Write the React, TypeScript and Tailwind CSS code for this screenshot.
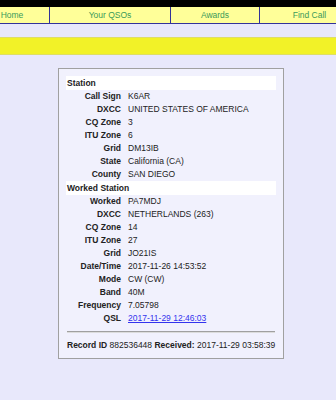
import React from 'react'

type Row = { label: string; value: string; link?: boolean }

const station: Row[] = [
  { label: 'Call Sign', value: 'K6AR' },
  { label: 'DXCC', value: 'UNITED STATES OF AMERICA' },
  { label: 'CQ Zone', value: '3' },
  { label: 'ITU Zone', value: '6' },
  { label: 'Grid', value: 'DM13IB' },
  { label: 'State', value: 'California (CA)' },
  { label: 'County', value: 'SAN DIEGO' },
]

const worked: Row[] = [
  { label: 'Worked', value: 'PA7MDJ' },
  { label: 'DXCC', value: 'NETHERLANDS (263)' },
  { label: 'CQ Zone', value: '14' },
  { label: 'ITU Zone', value: '27' },
  { label: 'Grid', value: 'JO21IS' },
  { label: 'Date/Time', value: '2017-11-26 14:53:52' },
  { label: 'Mode', value: 'CW (CW)' },
  { label: 'Band', value: '40M' },
  { label: 'Frequency', value: '7.05798' },
  { label: 'QSL', value: '2017-11-29 12:46:03', link: true },
]

function Section({ title, rows }: { title: string; rows: Row[] }) {
  return (
    <div>
      <div className="bg-white h-[14px] leading-[14px] pl-[1px] font-bold">{title}</div>
      {rows.map((r) => (
        <div key={r.label} className="flex h-[13px] leading-[13px]">
          <div className="w-[55px] text-right font-bold shrink-0">{r.label}</div>
          <div className="pl-[7px] whitespace-nowrap">
            {r.link ? <a href="#" className="text-[#3333ee] underline">{r.value}</a> : r.value}
          </div>
        </div>
      ))}
    </div>
  )
}

export default function App() {
  return (
    <div
      className="w-[336px] h-[400px] overflow-hidden bg-[#e8e8fb] text-[8.5px] text-[#222]"
      style={{ fontFamily: '"Liberation Sans", Arial, sans-serif' }}
    >
      <div className="h-[7px] bg-black" />
      <div className="flex h-[17px] leading-[16px] bg-[#ffff99] text-[#3a9a5a] border-b border-[#333399] overflow-hidden">
        <div className="w-[75px] ml-[-25px] shrink-0 text-center border-r border-[#333399]">Home</div>
        <div className="w-[121px] shrink-0 text-center border-r border-[#333399]">Your QSOs</div>
        <div className="w-[89px] shrink-0 text-center border-r border-[#333399]">Awards</div>
        <div className="w-[99px] shrink-0 text-center">Find Call</div>
      </div>
      <div className="h-[13px]" />
      <div className="h-[18px] bg-[#f2f228] border-y border-[#dede66]" />
      <div className="h-[13px]" />
      <div className="ml-[58px] w-[226px] border border-[#a0a0a0] bg-[#f1f1fd] p-[7px]">
        <Section title="Station" rows={station} />
        <Section title="Worked Station" rows={worked} />
        <div className="mx-[1px] mt-[6px] border-t border-[#a0a0a0] border-b border-b-[#dcdcdc]" />
        <div className="h-[12px] leading-[12px] mt-[6px] pl-[1px] whitespace-nowrap">
          <span className="font-bold">Record ID</span> 882536448{' '}
          <span className="font-bold">Received:</span> 2017-11-29 03:58:39
        </div>
      </div>
    </div>
  )
}
